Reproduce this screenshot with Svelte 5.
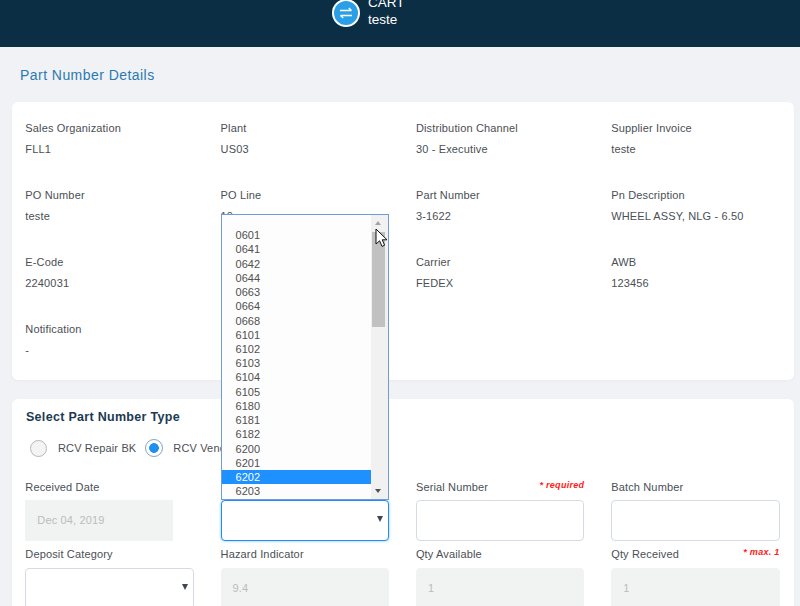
<script>
  const details = [
    { label: 'Sales Organization', value: 'FLL1' },
    { label: 'Plant', value: 'US03' },
    { label: 'Distribution Channel', value: '30 - Executive' },
    { label: 'Supplier Invoice', value: 'teste' },
    { label: 'PO Number', value: 'teste' },
    { label: 'PO Line', value: '10' },
    { label: 'Part Number', value: '3-1622' },
    { label: 'Pn Description', value: 'WHEEL ASSY, NLG - 6.50' },
    { label: 'E-Code', value: '2240031' },
    { label: '', value: '' },
    { label: 'Carrier', value: 'FEDEX' },
    { label: 'AWB', value: '123456' },
    { label: 'Notification', value: '-' }
  ];

  const options = [
    '', '0601', '0641', '0642', '0644', '0663', '0664', '0668', '6101', '6102',
    '6103', '6104', '6105', '6180', '6181', '6182', '6200', '6201', '6202', '6203'
  ];
</script>

<div class="page">
  <header class="topbar">
    <span class="swap">
      <svg width="16" height="16" viewBox="0 0 16 16" fill="none" stroke="#fff" stroke-width="1.4">
        <path d="M2 5.5H13.5M10.8 3L13.5 5.5M14 10.5H2.5M5.2 13L2.5 10.5" />
      </svg>
    </span>
    <div class="cart">
      <span>CART</span>
      <span>teste</span>
    </div>
  </header>

  <h1 class="title">Part Number Details</h1>

  <section class="card details">
    {#each details as item}
      <div class="detail">
        <div class="label">{item.label}</div>
        <div class="value">{item.value}</div>
      </div>
    {/each}
  </section>

  <section class="card form">
    <h2>Select Part Number Type</h2>
    <div class="radios">
      <span class="radio"></span>
      <span class="radio-label first">RCV Repair BK</span>
      <span class="radio checked"></span>
      <span class="radio-label second">RCV Vendor</span>
    </div>

    <div class="fields">
      <div class="field">
        <div class="label">Received Date</div>
        <div class="input disabled narrow">Dec 04, 2019</div>
      </div>
      <div class="field dropdown">
        <div class="label"></div>
        <div class="input focus"><span class="caret"></span></div>
        <div class="listbox">
          <div class="options">
            {#each options as opt}
              <div class="option" class:selected={opt === '6202'}>{opt}</div>
            {/each}
          </div>
          <div class="scrollbar">
            <span class="arrow up"></span>
            <span class="thumb"></span>
            <span class="arrow down"></span>
          </div>
        </div>
        <svg class="pointer" width="14" height="20" viewBox="0 0 14 20">
          <path d="M1 1V16L4.6 12.8L7 18.4L9.6 17.2L7.2 11.8H12Z" fill="#fff" stroke="#111" stroke-width="1" />
        </svg>
      </div>
      <div class="field">
        <div class="label">Serial Number <em>* required</em></div>
        <div class="input"></div>
      </div>
      <div class="field">
        <div class="label">Batch Number</div>
        <div class="input"></div>
      </div>
      <div class="field">
        <div class="label">Deposit Category</div>
        <div class="input"><span class="caret"></span></div>
      </div>
      <div class="field">
        <div class="label">Hazard Indicator</div>
        <div class="input disabled">9.4</div>
      </div>
      <div class="field">
        <div class="label">Qty Available</div>
        <div class="input disabled">1</div>
      </div>
      <div class="field">
        <div class="label">Qty Received <em>* max. 1</em></div>
        <div class="input disabled">1</div>
      </div>
    </div>
  </section>
</div>

<style>
  :global(body) {
    margin: 0;
    background: #f0f2f5;
  }

  .page {
    height: 606px;
    overflow: hidden;
    font-family: "Liberation Sans", Arial, sans-serif;
    font-size: 11px;
    letter-spacing: 0.15px;
    color: #4a4f55;
  }

  .topbar {
    height: 47px;
    box-sizing: border-box;
    background: #0b2e44;
    display: flex;
    justify-content: center;
    align-items: flex-start;
    gap: 8px;
    padding-right: 64px;
    color: #fff;
    overflow: hidden;
  }

  .swap {
    width: 28px;
    height: 28px;
    margin-top: -1px;
    box-sizing: border-box;
    border: 2px solid #fff;
    border-radius: 50%;
    background: #2b9fe6;
    display: flex;
    align-items: center;
    justify-content: center;
  }

  .cart {
    display: flex;
    flex-direction: column;
    width: 36px;
    margin-top: -6px;
    font-size: 13.5px;
    line-height: 17px;
    letter-spacing: 0;
  }

  .title {
    margin: 0;
    padding: 20px 20px 0;
    height: 35px;
    font-size: 14px;
    line-height: 17px;
    font-weight: 400;
    letter-spacing: 0.45px;
    color: #2a7ab2;
  }

  .card {
    margin: 0 6px 19px 12px;
    padding: 0 14px 0 13.3px;
    background: #fff;
    border-radius: 6px;
    box-shadow: 0 1px 3px rgba(0, 0, 0, 0.03);
  }

  .details {
    height: 278px;
    box-sizing: border-box;
    padding-top: 20px;
    display: grid;
    grid-template-columns: repeat(4, 168.5px);
    grid-auto-rows: 67px;
    column-gap: 26.8px;
  }

  .label {
    min-height: 13px;
    line-height: 13px;
    position: relative;
    white-space: nowrap;
  }

  .value {
    margin-top: 8px;
    line-height: 13px;
  }

  .form {
    height: 300px;
    padding-top: 11px;
  }

  h2 {
    margin: 0 0 0 0.7px;
    font-size: 12.5px;
    line-height: 15px;
    font-weight: 700;
    letter-spacing: 0.3px;
    color: #1c3a52;
  }

  .radios {
    display: flex;
    align-items: center;
    margin-top: 14px;
    padding-left: 4.7px;
    height: 18px;
  }

  .radio {
    width: 15px;
    height: 15px;
    border: 1px solid #b5b8bb;
    border-radius: 50%;
    background: #f4f4f4;
    flex: none;
  }

  .radio.checked {
    width: 16px;
    height: 16px;
    border-color: #8aa3bb;
    background: radial-gradient(circle, #1e90f0 0 4.5px, #fff 5.2px);
  }

  .radio-label {
    margin-left: 11px;
  }

  .radio-label.first {
    margin-right: 9px;
  }

  .radio-label.second {
    margin-left: 10px;
  }

  .fields {
    display: grid;
    grid-template-columns: repeat(4, 168.5px);
    column-gap: 26.8px;
    grid-auto-rows: 67.4px;
    margin-top: 24px;
  }

  .field {
    position: relative;
  }

  .input {
    position: relative;
    height: 41px;
    box-sizing: border-box;
    margin-top: 6.3px;
    border: 1px solid #d5dbe5;
    border-radius: 4px;
    background: #fff;
    padding: 0 11px;
    line-height: 39px;
  }

  .input.disabled {
    border: 0;
    background: #f1f2f2;
    color: #b9bcbe;
    line-height: 41px;
    padding-left: 12px;
  }

  .input.narrow {
    width: 148px;
    border-radius: 0;
  }

  .input.focus {
    border-color: #1e8cf0;
    box-shadow: 0 0 3px rgba(30, 140, 240, 0.5);
  }

  .caret {
    position: absolute;
    right: 5px;
    top: 15px;
    border-left: 3.5px solid transparent;
    border-right: 3.5px solid transparent;
    border-top: 6px solid #3c4658;
  }

  em {
    position: absolute;
    right: 0;
    top: -2px;
    font-size: 9px;
    font-style: italic;
    font-weight: 700;
    letter-spacing: 0.3px;
    color: #ff2020;
  }

  .listbox {
    position: absolute;
    left: 0;
    top: -267px;
    width: 168px;
    height: 286px;
    box-sizing: border-box;
    border: 1px solid #6f9bd8;
    background: #fdfdfd;
    display: flex;
    overflow: hidden;
  }

  .options {
    flex: 1;
    margin-top: -1px;
  }

  .option {
    height: 14.22px;
    line-height: 14.22px;
    padding-left: 14px;
    letter-spacing: 0;
    color: #505050;
  }

  .option.selected {
    background: #1e90ff;
    color: #fff;
  }

  .scrollbar {
    position: relative;
    width: 17px;
    background: #f1f1f1;
  }

  .thumb {
    position: absolute;
    left: 1px;
    top: 17px;
    width: 13px;
    height: 95px;
    background: #c1c1c1;
  }

  .arrow {
    position: absolute;
    left: 4px;
    border-left: 3.5px solid transparent;
    border-right: 3.5px solid transparent;
  }

  .arrow.up {
    top: 6px;
    border-bottom: 4px solid #a3a3a3;
  }

  .arrow.down {
    bottom: 6px;
    border-top: 4px solid #505050;
  }

  .pointer {
    position: absolute;
    left: 154px;
    top: -253px;
  }
</style>
